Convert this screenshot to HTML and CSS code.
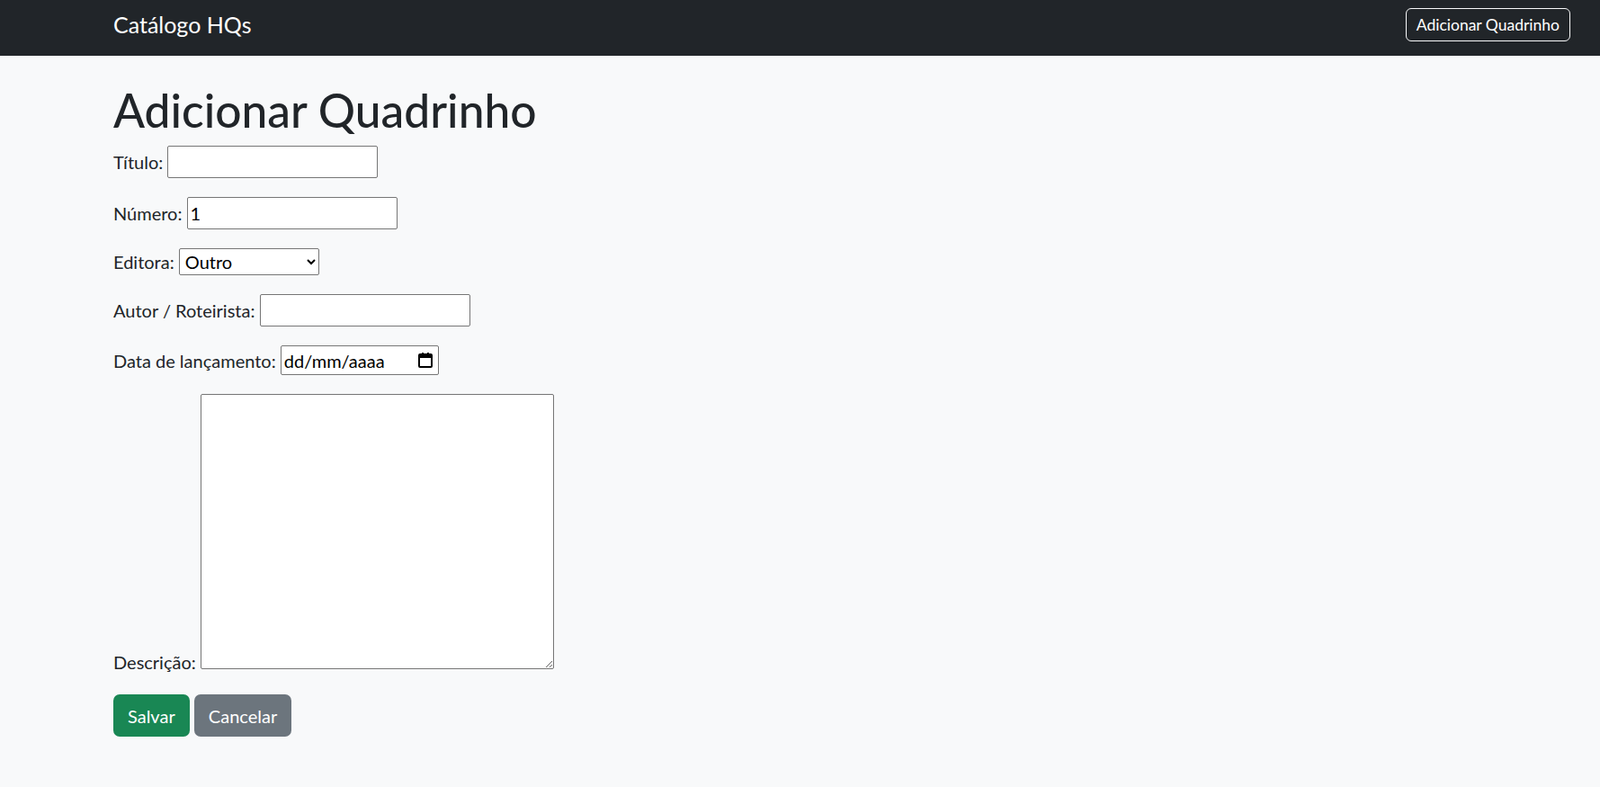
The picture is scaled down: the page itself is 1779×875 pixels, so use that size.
FILE: index.html
```html
<!DOCTYPE html>
<html lang="pt-BR">
<head>
<meta charset="utf-8">
<title>Catálogo HQs</title>
<link rel="stylesheet" href="styles.css">
</head>
<body>
<nav class="navbar">
  <a class="brand" href="#">Catálogo HQs</a>
  <a class="btn-outline" href="#">Adicionar Quadrinho</a>
</nav>
<main class="container">
  <h1 class="title">Adicionar Quadrinho</h1>
  <form class="form">
    <div class="row"><label>Título:</label> <input class="field" type="text"></div>
    <div class="row"><label>Número:</label> <input class="field" type="text" value="1"></div>
    <div class="row"><label>Editora:</label> <select class="select"><option>Outro</option></select></div>
    <div class="row"><label>Autor / Roteirista:</label> <input class="field" type="text"></div>
    <div class="row"><label>Data de lançamento:</label> <span class="date"><span class="date-text">dd/mm/aaaa</span><svg class="cal" width="16" height="17" viewBox="0 0 16 17"><rect x="1" y="2" width="14" height="14" rx="1" fill="none" stroke="#000" stroke-width="2"/><rect x="1" y="2" width="14" height="4" fill="#000"/><rect x="4" y="0" width="2" height="3" fill="#000"/><rect x="10" y="0" width="2" height="3" fill="#000"/></svg></span></div>
    <div class="row"><label>Descrição:</label> <textarea class="area" rows="10"></textarea></div>
    <div class="actions"><button type="button" class="btn btn-success">Salvar</button> <button type="button" class="btn btn-secondary">Cancelar</button></div>
  </form>
</main>
</body>
</html>
```
FILE: styles.css
```css
* { box-sizing: border-box; }
html, body { margin: 0; }
body {
  background: #f8f9fa;
  color: #212529;
  font-family: "Segoe UI", Lato, sans-serif;
  font-size: 20px;
  line-height: 30px;
}
.navbar {
  height: 62px;
  background: #212529;
  display: flex;
  justify-content: space-between;
  align-items: center;
  padding: 0 33px 8px 126px;
}
.brand {
  color: #fff;
  text-decoration: none;
  font-size: 25px;
  line-height: 37px;
}
.btn-outline {
  color: #fff;
  text-decoration: none;
  border: 1px solid #f8f9fa;
  border-radius: 6px;
  font-size: 17.5px;
  line-height: 27px;
  padding: 4px 11px;
  height: 37px;
}
.container { padding: 30px 0 0 126px; }
.title {
  font-size: 51.5px;
  font-weight: 500;
  line-height: 60px;
  margin: 0 0 10px;
}
.row { margin-bottom: 21px; }
.field, .select, .area, .date {
  font: inherit;
  color: #000;
  background: #fff;
  border: 1px solid #767676;
  border-radius: 2px;
}
.field { width: 234px; height: 36px; padding: 1px 3px; }
.select { width: 156px; height: 30px; padding: 0 2px; }
.date {
  display: inline-flex;
  align-items: center;
  width: 176px;
  height: 33px;
  padding: 0 6px 0 3px;
  justify-content: space-between;
}
.area { width: 393px; height: 306px; padding: 2px; vertical-align: baseline; }
.btn {
  font: inherit;
  color: #fff;
  border: 1px solid transparent;
  border-radius: 7px;
  padding: 7px 15px;
  height: 47px;
}
.btn-success { background: #198754; }
.btn-secondary { background: #6c757d; }
```
